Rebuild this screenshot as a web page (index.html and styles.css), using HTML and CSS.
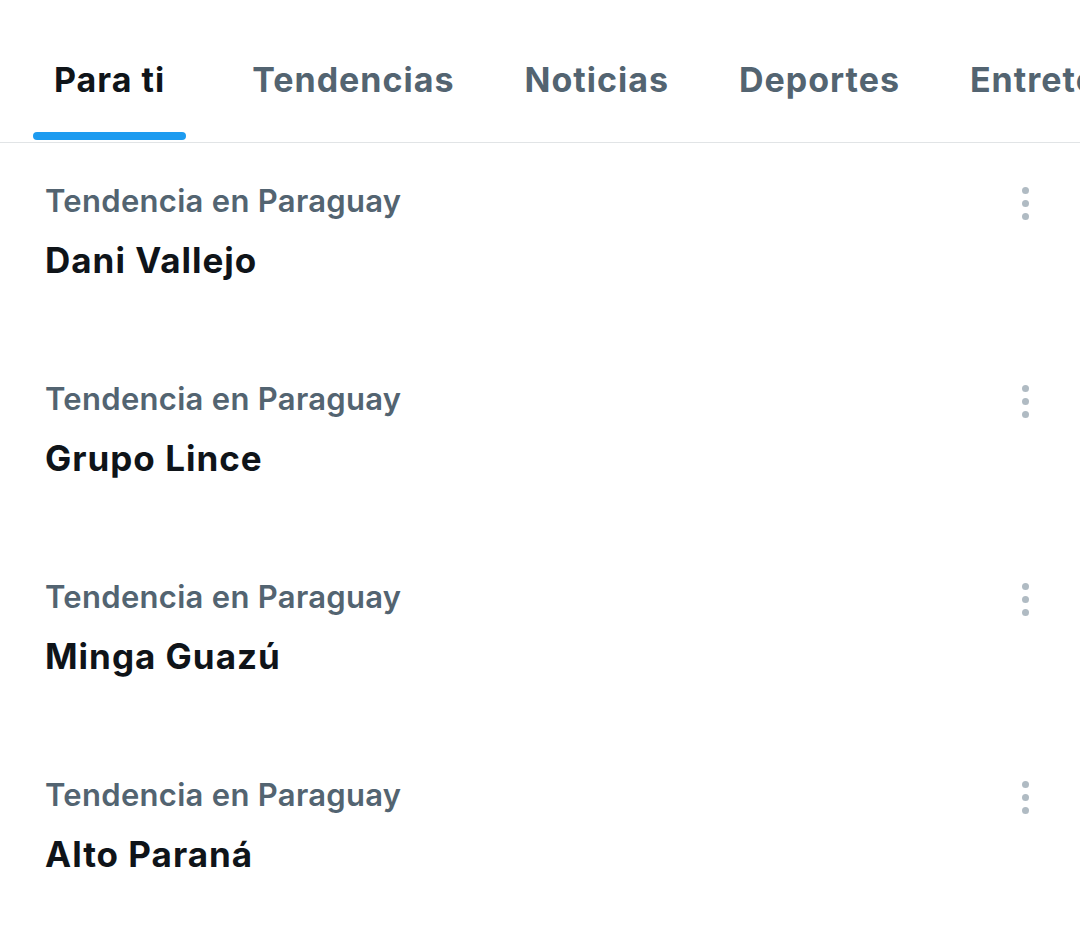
FILE: index.html
```
<!DOCTYPE html>
<html lang="es">
<head>
<meta charset="utf-8">
<link rel="stylesheet" href="styles.css">
</head>
<body>
<nav class="tabs">
  <div class="tab active"><span class="tab-label">Para ti</span><span class="indicator"></span></div>
  <div class="tab"><span class="tab-label">Tendencias</span></div>
  <div class="tab"><span class="tab-label">Noticias</span></div>
  <div class="tab"><span class="tab-label">Deportes</span></div>
  <div class="tab"><span class="tab-label">Entretenimiento</span></div>
</nav>
<main class="list">
  <div class="trend">
    <div class="trend-text">
      <div class="context">Tendencia en Paraguay</div>
      <div class="name">Dani Vallejo</div>
    </div>
    <div class="more"><span></span><span></span><span></span></div>
  </div>
  <div class="trend">
    <div class="trend-text">
      <div class="context">Tendencia en Paraguay</div>
      <div class="name">Grupo Lince</div>
    </div>
    <div class="more"><span></span><span></span><span></span></div>
  </div>
  <div class="trend">
    <div class="trend-text">
      <div class="context">Tendencia en Paraguay</div>
      <div class="name">Minga Guazú</div>
    </div>
    <div class="more"><span></span><span></span><span></span></div>
  </div>
  <div class="trend">
    <div class="trend-text">
      <div class="context">Tendencia en Paraguay</div>
      <div class="name">Alto Paraná</div>
    </div>
    <div class="more"><span></span><span></span><span></span></div>
  </div>
</main>
</body>
</html>
```
FILE: styles.css
```
html, body {
  margin: 0;
  padding: 0;
  background: #ffffff;
  overflow: hidden;
}
body {
  width: 1080px;
  height: 942px;
  font-family: "Inter", "Liberation Sans", sans-serif;
}
.tabs {
  display: flex;
  height: 142px;
  border-bottom: 1px solid #e1e4e6;
  padding-left: 19px;
  white-space: nowrap;
  overflow: hidden;
}
.tab {
  position: relative;
  flex: 0 0 auto;
  padding: 0 35px;
  display: flex;
  align-items: flex-start;
  padding-top: 56px;
  font-size: 34px;
  font-weight: 700;
  line-height: 48px;
  letter-spacing: 1px;
  color: #536471;
}
.tab.active {
  color: #0f1419;
  margin-right: 17px;
}
.indicator {
  position: absolute;
  left: 14px;
  right: 14px;
  bottom: 2px;
  height: 8px;
  border-radius: 4px;
  background: #1d9bf0;
}
.trend {
  display: flex;
  justify-content: space-between;
  align-items: flex-start;
  height: 198px;
  padding: 36px 42px 0 45px;
  box-sizing: border-box;
}
.context {
  font-size: 31px;
  font-weight: 600;
  line-height: 44px;
  letter-spacing: 0.3px;
  color: #536471;
}
.name {
  margin-top: 10px;
  font-size: 35px;
  font-weight: 700;
  line-height: 54px;
  letter-spacing: 1px;
  color: #0f1419;
}
.more {
  display: flex;
  flex-direction: column;
  align-items: center;
  gap: 6px;
  padding-top: 8px;
  padding-right: 9px;
}
.more span {
  width: 7px;
  height: 7px;
  border-radius: 50%;
  background: #b0bbc3;
}
```
